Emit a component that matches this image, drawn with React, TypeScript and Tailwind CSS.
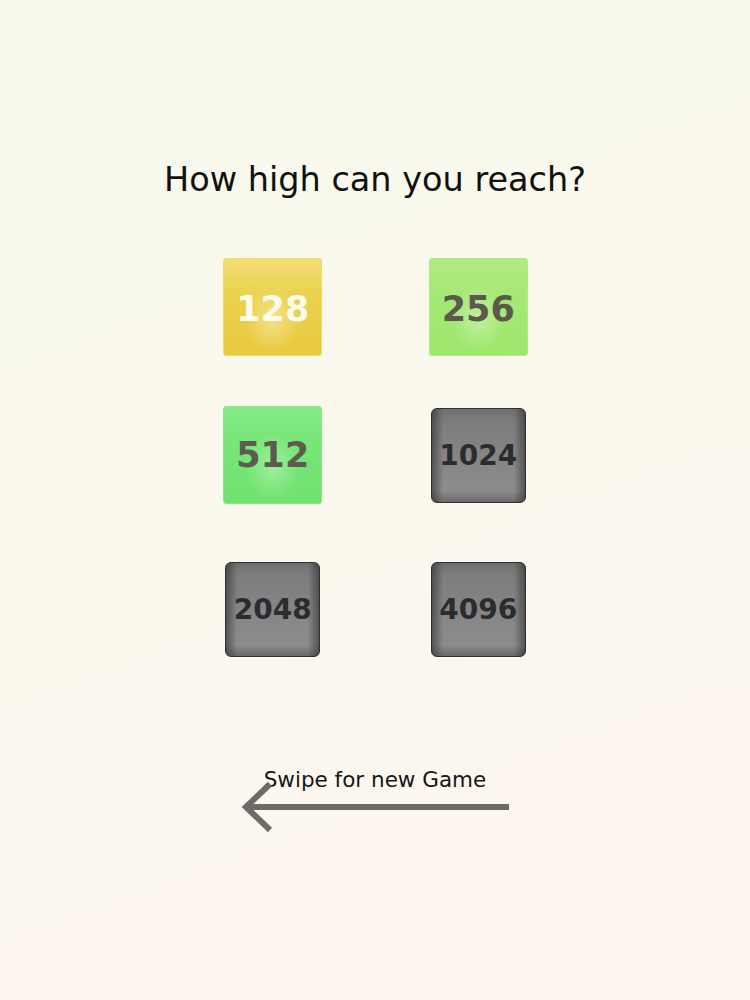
const FONT = "font-['DejaVu_Sans','Liberation_Sans',sans-serif]";

type TileProps = { value: number; kind: 'yellow' | 'lime' | 'green' | 'dark' };

const TILE_STYLE: Record<TileProps['kind'], string> = {
  yellow:
    'w-[99px] h-[98px] pt-[5px] rounded-[3px] border border-[#eed872] bg-[radial-gradient(ellipse_at_50%_62%,rgba(255,250,215,0.45),rgba(255,250,215,0)_40%),linear-gradient(180deg,#f2de74_0%,#ebd250_35%,#e8c93e_100%)] text-[#fdfbea] text-[35px]',
  lime:
    'w-[99px] h-[98px] pt-[4px] rounded-[3px] border border-[#b0ea86] bg-[radial-gradient(ellipse_at_50%_62%,rgba(240,255,220,0.4),rgba(240,255,220,0)_40%),linear-gradient(180deg,#b0ea82_0%,#a6e876_40%,#9ee66c_100%)] text-[#5a594b] text-[35px]',
  green:
    'w-[99px] h-[98px] pt-0 rounded-[3px] border border-[#86e886] bg-[radial-gradient(ellipse_at_50%_62%,rgba(225,255,220,0.4),rgba(225,255,220,0)_40%),linear-gradient(180deg,#86ea86_0%,#76e676_40%,#70e270_100%)] text-[#5d5a4f] text-[35px]',
  dark:
    'w-[95px] h-[95px] pt-[1px] rounded-[6px] border-[1.5px] border-[#2f2f2f] bg-[linear-gradient(90deg,rgba(40,40,40,0.55)_0%,rgba(40,40,40,0)_12%,rgba(40,40,40,0)_88%,rgba(40,40,40,0.55)_100%),linear-gradient(180deg,#6e6e6e_0%,#7c7c7c_12%,#858585_50%,#8c8c8c_88%,#6a6a6a_100%)] text-[#2c2c30] text-[28px]',
};

function Tile({ value, kind }: TileProps) {
  return (
    <div className="flex h-[100px] w-[100px] items-center justify-center">
      <div
        className={`${TILE_STYLE[kind]} flex items-center justify-center font-bold leading-none ${FONT}`}
      >
        {value}
      </div>
    </div>
  );
}

export default function App() {
  return (
    <div
      className={`flex h-[1000px] w-[750px] flex-col items-center bg-[linear-gradient(160deg,#f8f9ec_0%,#fbf8ee_50%,#fef6f0_100%)] ${FONT}`}
    >
      <h1 className="mt-[160px] text-[33.5px] font-normal leading-[40px] text-[#111111]">
        How high can you reach?
      </h1>

      <div className="ml-[1px] mt-[57px] flex flex-col">
        <div className="flex gap-[105.5px]">
          <Tile value={128} kind="yellow" />
          <Tile value={256} kind="lime" />
        </div>
        <div className="mt-[48px] flex gap-[105.5px]">
          <Tile value={512} kind="green" />
          <Tile value={1024} kind="dark" />
        </div>
        <div className="mt-[54.5px] flex gap-[105.5px]">
          <Tile value={2048} kind="dark" />
          <Tile value={4096} kind="dark" />
        </div>
      </div>

      <div className="mt-[107px] flex flex-col items-center">
        <p className="text-[21.5px] leading-[26px] text-[#161616]">Swipe for new Game</p>
        <svg
          width="270"
          height="54"
          viewBox="0 0 270 54"
          className="-mt-[12.5px] ml-[1px]"
          fill="none"
          stroke="#6b6b68"
          strokeWidth="6"
        >
          <line x1="5" y1="27" x2="268" y2="27" />
          <polyline points="29,4 5,27 29,50" strokeLinejoin="miter" />
        </svg>
      </div>
    </div>
  );
}
